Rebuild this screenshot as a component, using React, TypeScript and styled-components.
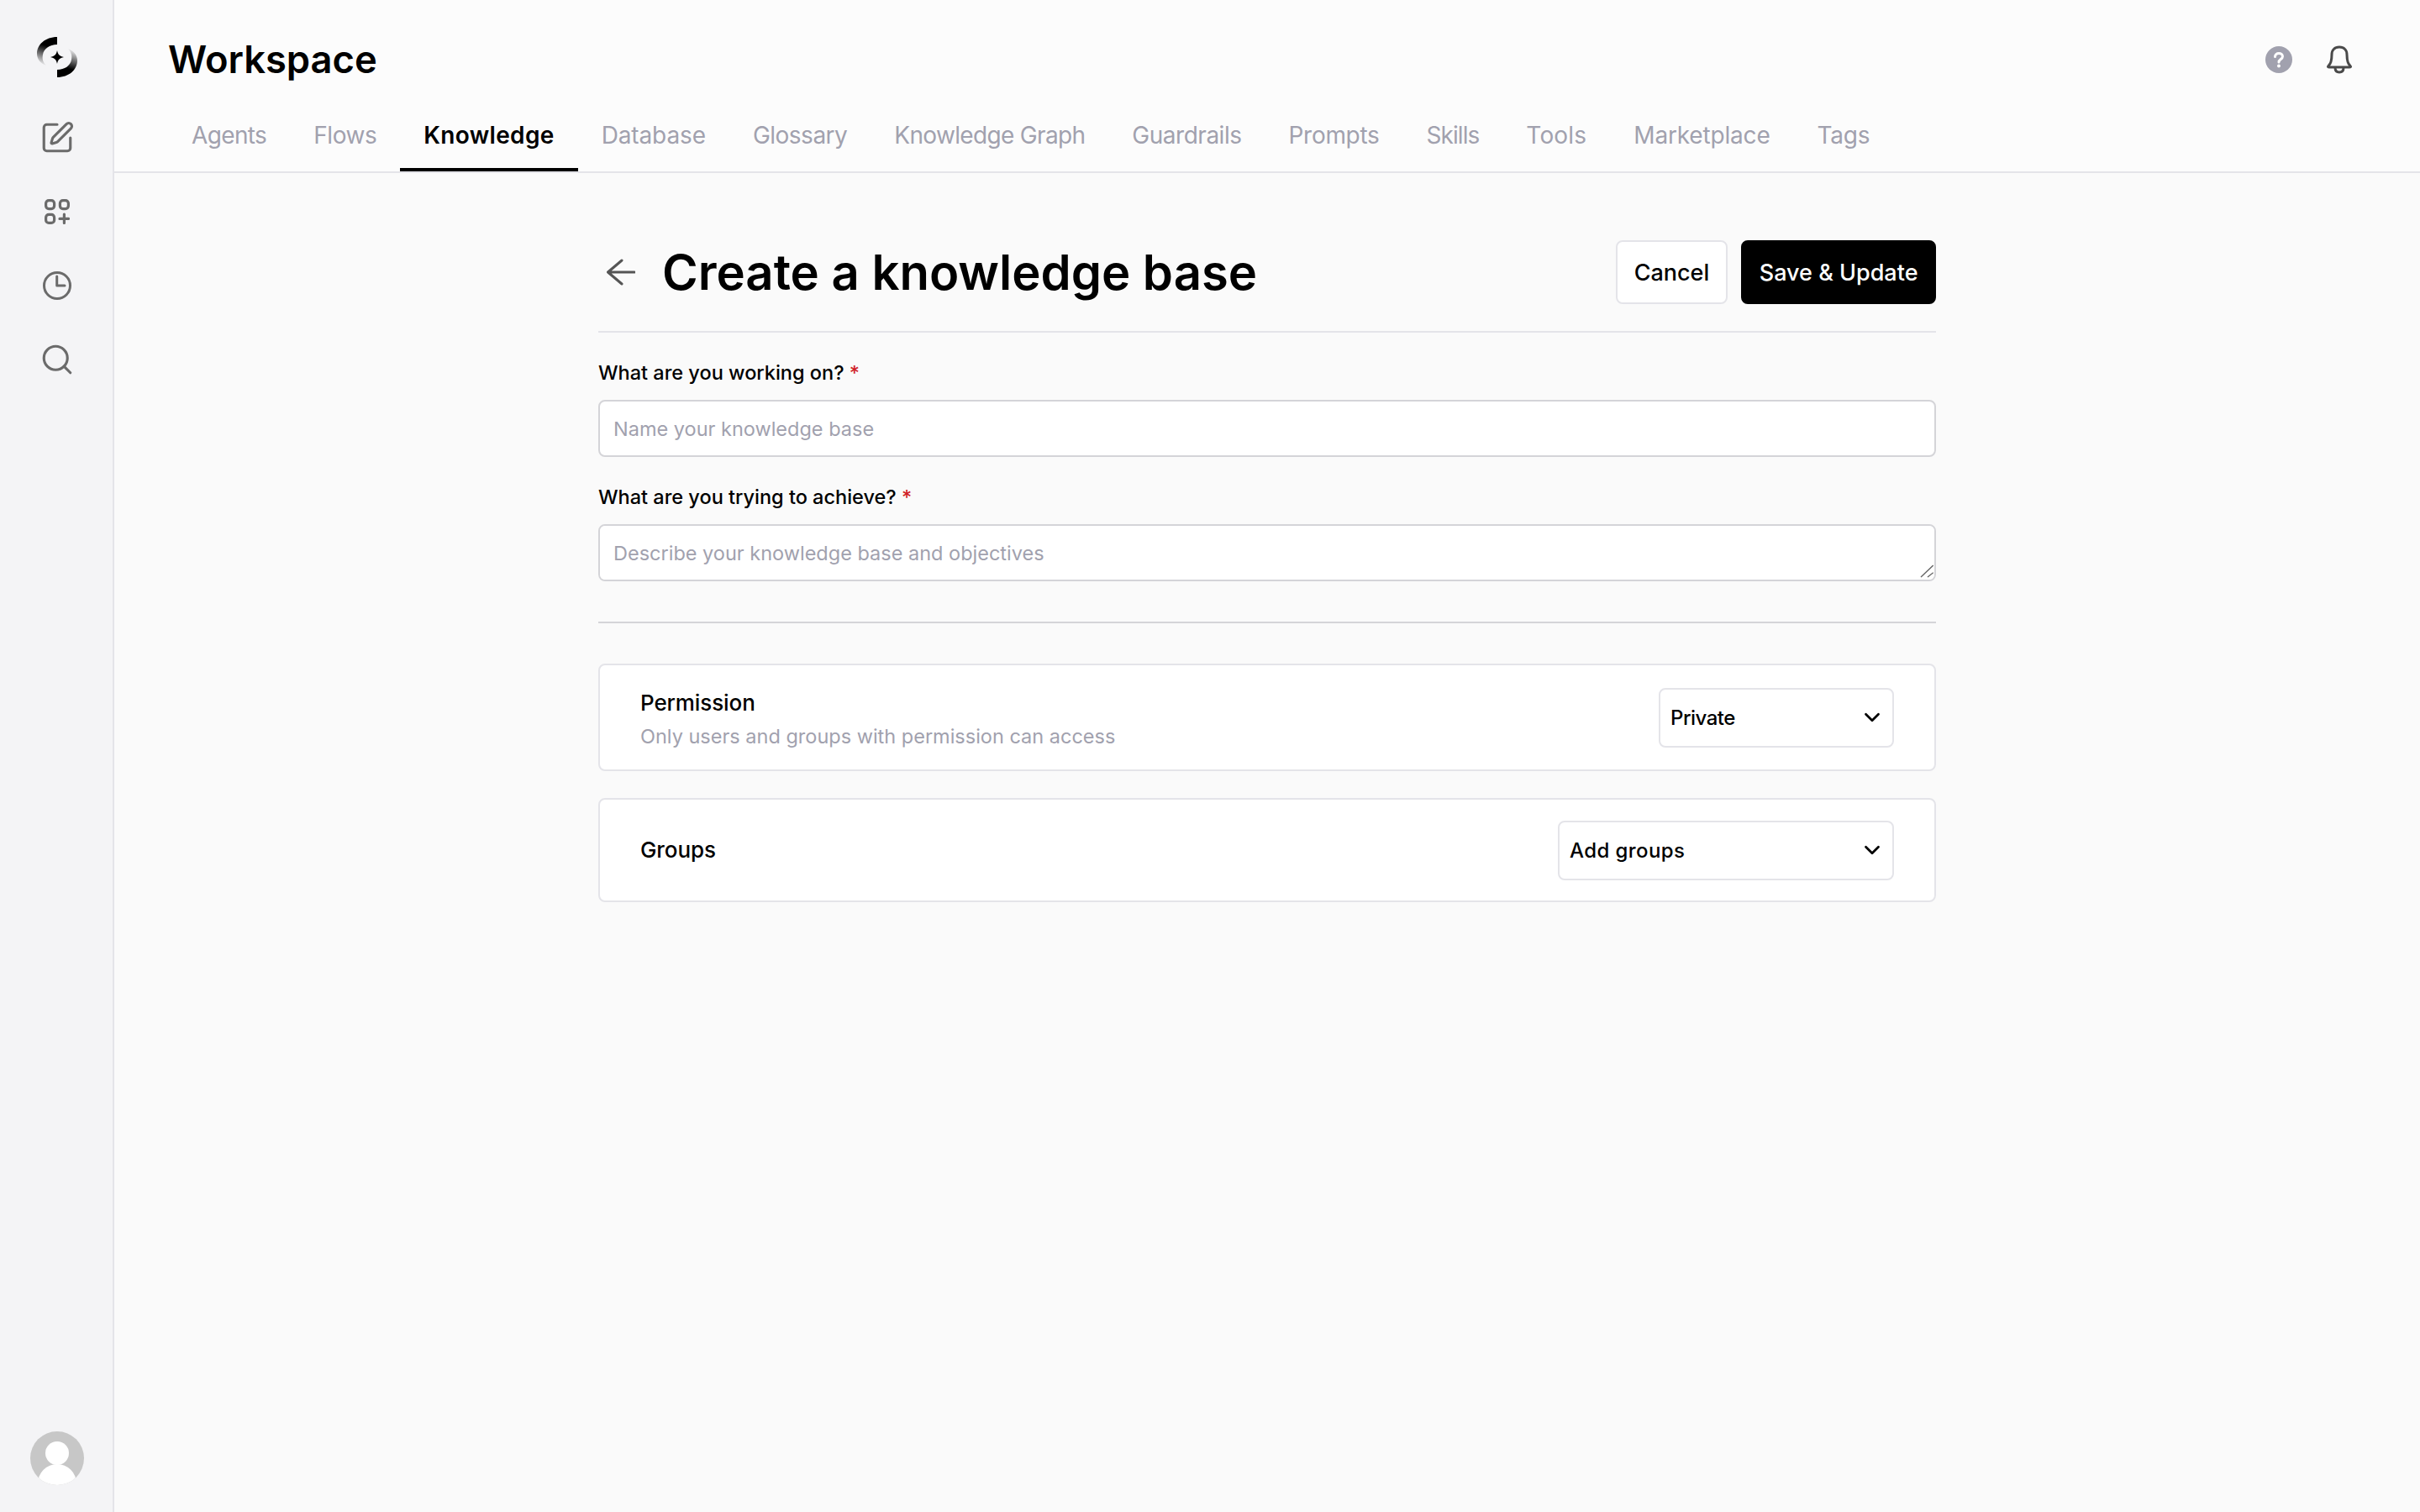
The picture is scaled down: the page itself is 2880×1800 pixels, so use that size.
import React from 'react';
import styled, {createGlobalStyle} from 'styled-components';
import {ChevronDown, Search, SquarePen} from 'lucide-react';

const GlobalStyle = createGlobalStyle`
  html, body {
    margin: 0;
    padding: 0;
    background: #fafafa;
  }
  * {
    box-sizing: border-box;
  }
  body {
    font-family: Inter, 'Liberation Sans', sans-serif;
    color: #000;
  }
`;

const TABS = [
  {label: 'Agents', spacing: -0.63},
  {label: 'Flows', spacing: -0.45},
  {label: 'Knowledge', spacing: 0.33},
  {label: 'Database', spacing: -0.12},
  {label: 'Glossary', spacing: -0.5},
  {label: 'Knowledge Graph', spacing: -0.67},
  {label: 'Guardrails', spacing: -0.48},
  {label: 'Prompts', spacing: -0.3},
  {label: 'Skills', spacing: -0.95},
  {label: 'Tools', spacing: 0.2},
  {label: 'Marketplace', spacing: -0.18},
  {label: 'Tags', spacing: -0.25},
];

const Page = styled.div`
  display: flex;
  width: 2880px;
  height: 1800px;
  overflow: hidden;
`;

const Sidebar = styled.aside`
  display: flex;
  flex-direction: column;
  align-items: center;
  flex: 0 0 136px;
  padding: 44px 0 32px 2px;
  background: #f4f4f6;
  border-right: 2px solid #e4e4e9;
`;

const SideNav = styled.nav`
  display: flex;
  flex-direction: column;
  align-items: center;
  gap: 52px;
  margin-top: 54px;
  color: #6b6b6b;
`;

const SideIcon = styled.div`
  display: flex;
  align-items: center;
  justify-content: center;
  width: 36px;
  height: 36px;
  svg {
    flex: none;
  }
`;

const Avatar = styled.svg`
  width: 64px;
  height: 64px;
  margin-top: auto;
`;

const Main = styled.main`
  display: flex;
  flex-direction: column;
  flex: 1;
`;

const Header = styled.header`
  display: flex;
  flex-direction: column;
  height: 206px;
  background: #fcfcfc;
  border-bottom: 2px solid #e4e4e9;
`;

const TopRow = styled.div`
  display: flex;
  align-items: center;
  justify-content: space-between;
  height: 142px;
  padding: 0 80px 0 64px;
`;

const PageTitle = styled.h1`
  margin: 0;
  font-size: 45.3px;
  line-height: 60px;
  font-weight: 600;
`;

const TopIcons = styled.div`
  display: flex;
  align-items: center;
  gap: 40px;
`;

const Tabs = styled.nav`
  display: flex;
  height: 62px;
  padding-left: 64px;
`;

const Tab = styled.a<{ $active?: boolean; $spacing: number }>`
  display: flex;
  align-items: center;
  height: 62px;
  padding: 0 28px 21px;
  font-size: 28px;
  letter-spacing: ${p => p.$spacing}px;
  font-weight: ${p => (p.$active ? 600 : 400)};
  color: ${p => (p.$active ? '#000' : '#a1a1ae')};
  border-bottom: 4px solid ${p => (p.$active ? '#000' : 'transparent')};
`;

const Content = styled.div`
  display: flex;
  flex-direction: column;
  width: 1592px;
  margin: 0 0 0 576px;
  padding-top: 80px;
`;

const TitleRow = styled.div`
  display: flex;
  align-items: center;
  justify-content: space-between;
  height: 110px;
  padding-bottom: 32px;
  border-bottom: 2px solid #e4e4e9;
`;

const TitleLeft = styled.div`
  display: flex;
  align-items: center;
  gap: 32px;
  padding-left: 8px;
`;

const FormTitle = styled.h2`
  margin: 0;
  font-size: 58px;
  line-height: 76px;
  font-weight: 600;
`;

const Actions = styled.div`
  display: flex;
  gap: 16px;
`;

const Button = styled.button<{ $primary?: boolean }>`
  height: 76px;
  padding: 0 ${p => (p.$primary ? 19.5 : 20)}px;
  font-family: inherit;
  font-size: 27px;
  font-weight: 500;
  border-radius: 8px;
  color: ${p => (p.$primary ? '#fff' : '#000')};
  background: ${p => (p.$primary ? '#000' : '#fff')};
  border: 2px solid ${p => (p.$primary ? '#000' : '#e4e4e9')};
`;

const Label = styled.label`
  display: block;
  margin: 33px 0 17px;
  font-size: 23.5px;
  line-height: 30px;
  font-weight: 500;
`;

const Required = styled.span`
  color: #d01f26;
`;

const fieldCss = `
  display: block;
  width: 100%;
  height: 68px;
  padding: 0 16px;
  font-family: inherit;
  font-size: 23.5px;
  background: #fff;
  border: 2px solid #d4d4d8;
  border-radius: 8px;
  outline: none;
  &::placeholder {
    color: #a1a1ae;
    opacity: 1;
  }
`;

const Input = styled.input`
  ${fieldCss}
`;

const TextAreaWrap = styled.div`
  position: relative;
`;

const TextArea = styled.textarea`
  ${fieldCss}
  padding: 18px 16px;
  line-height: 30px;
  resize: none;
`;

const ResizeGrip = styled.svg`
  position: absolute;
  right: 3px;
  bottom: 4px;
  width: 16px;
  height: 16px;
  pointer-events: none;
`;

const Divider = styled.hr`
  width: 100%;
  height: 2px;
  margin: 48px 0;
  background: #d4d4d8;
  border: 0;
`;

const Card = styled.section<{ $height: number }>`
  display: flex;
  align-items: center;
  justify-content: space-between;
  height: ${p => p.$height}px;
  padding: 0 48px;
  margin-bottom: 32px;
  background: #fff;
  border: 2px solid #e4e4e9;
  border-radius: 8px;
`;

const CardTitle = styled.div`
  font-size: 26px;
  line-height: 42px;
  letter-spacing: -0.1px;
  font-weight: 500;
`;

const CardHint = styled.div`
  margin-top: 3px;
  font-size: 23.5px;
  line-height: 32px;
  color: #a1a1ae;
`;

const Select = styled.div<{ $width: number; $spacing: number }>`
  display: flex;
  align-items: center;
  justify-content: space-between;
  width: ${p => p.$width}px;
  height: 71px;
  padding: 0 9px 0 12px;
  font-size: 24px;
  letter-spacing: ${p => p.$spacing}px;
  font-weight: 500;
  background: #fff;
  border: 2px solid #e4e4e9;
  border-radius: 8px;
`;

const Logo = () => (
  <svg width="48" height="48" viewBox="0 0 48 48">
    <defs>
      <linearGradient id="logoTop" x1="0.5" y1="0" x2="0.3" y2="1">
        <stop offset="0.3" stopColor="#000" />
        <stop offset="1" stopColor="#000" stopOpacity="0" />
      </linearGradient>
      <linearGradient id="logoBottom" x1="0.5" y1="1" x2="0.7" y2="0">
        <stop offset="0.3" stopColor="#000" />
        <stop offset="1" stopColor="#000" stopOpacity="0" />
      </linearGradient>
    </defs>
    <path fill="url(#logoTop)" d="M24 0C10 0 0 9 0 20C0 27 5 32 11 34C7 30 6 26 7 21C8 14 15 9 24 9Z" />
    <path fill="url(#logoBottom)" d="M24 48C38 48 48 39 48 28C48 21 43 16 37 14C41 18 42 22 41 27C40 34 33 39 24 39Z" />
    <path fill="#000" d="M24 16C25 21 27 23 32 24C27 25 25 27 24 32C23 27 21 25 16 24C21 23 23 21 24 16Z" />
  </svg>
);

const WidgetPlus = () => (
  <svg width="30" height="30" viewBox="0 0 30 30" fill="none" stroke="currentColor" strokeWidth="3.2" strokeLinecap="round">
    <rect x="1.6" y="1.6" width="10" height="10" rx="3.5" />
    <rect x="18.4" y="1.6" width="10" height="10" rx="3.5" />
    <rect x="1.6" y="18.4" width="10" height="10" rx="3.5" />
    <path d="M23.4 18V28.6M18 23.4H28.6" />
  </svg>
);

const ClockIcon = () => (
  <svg width="36" height="36" viewBox="0 0 36 36" fill="none" stroke="currentColor" strokeWidth="3" strokeLinecap="round" strokeLinejoin="round">
    <circle cx="18" cy="18" r="15.5" />
    <path d="M17.7 7V18H27" />
  </svg>
);

const HelpIcon = () => (
  <svg width="32" height="32" viewBox="0 0 32 32">
    <circle cx="16" cy="16" r="16" fill="#a1a1ae" />
    <path d="M11.5 12.5C11.5 10 13.5 8.5 16 8.5C18.5 8.5 20.5 10 20.5 12.3C20.5 15.5 16 15.5 16 19" fill="none" stroke="#fff" strokeWidth="3" strokeLinecap="round" />
    <circle cx="16" cy="23.5" r="2" fill="#fff" />
  </svg>
);

const BellIcon = () => (
  <svg width="32" height="34" viewBox="0 0 32 34" fill="none" stroke="#4a4a4a" strokeWidth="3" strokeLinecap="round" strokeLinejoin="round">
    <path d="M3 24.5C6 22 7 18 7 11C7 5.5 10.5 2 16 2C21.5 2 25 5.5 25 11C25 18 26 22 29 24.5C30 25.5 29.5 26 28 26H4C2.5 26 2 25.5 3 24.5Z" />
    <path d="M11 26.5C11 30 13 32 16 32C19 32 21 30 21 26.5" />
  </svg>
);

const BackArrow = () => (
  <svg width="36" height="36" viewBox="0 0 36 36" fill="none" stroke="#555" strokeWidth="3" strokeLinecap="round" strokeLinejoin="round">
    <path d="M35 18H4M20 4L3.5 18L20 32" />
  </svg>
);

export default function App() {
  return (
    <Page>
      <GlobalStyle />
      <Sidebar>
        <Logo />
        <SideNav>
          <SideIcon><SquarePen size={42} strokeWidth={1.8} /></SideIcon>
          <SideIcon><WidgetPlus /></SideIcon>
          <SideIcon><ClockIcon /></SideIcon>
          <SideIcon><Search size={42} strokeWidth={1.8} /></SideIcon>
        </SideNav>
        <Avatar viewBox="0 0 64 64">
          <defs>
            <clipPath id="avatarClip"><circle cx="32" cy="32" r="32" /></clipPath>
          </defs>
          <g clipPath="url(#avatarClip)">
            <rect width="64" height="64" fill="#c7c7c7" />
            <circle cx="32" cy="26" r="14" fill="#fff" />
            <ellipse cx="32" cy="62" rx="23" ry="23" fill="#fff" />
          </g>
        </Avatar>
      </Sidebar>
      <Main>
        <Header>
          <TopRow>
            <PageTitle>Workspace</PageTitle>
            <TopIcons>
              <HelpIcon />
              <BellIcon />
            </TopIcons>
          </TopRow>
          <Tabs>
            {TABS.map(tab => (
              <Tab key={tab.label} $active={tab.label === 'Knowledge'} $spacing={tab.spacing}>{tab.label}</Tab>
            ))}
          </Tabs>
        </Header>
        <Content>
          <TitleRow>
            <TitleLeft>
              <BackArrow />
              <FormTitle>Create a knowledge base</FormTitle>
            </TitleLeft>
            <Actions>
              <Button>Cancel</Button>
              <Button $primary>Save &amp; Update</Button>
            </Actions>
          </TitleRow>
          <Label>What are you working on? <Required>*</Required></Label>
          <Input placeholder="Name your knowledge base" />
          <Label>What are you trying to achieve? <Required>*</Required></Label>
          <TextAreaWrap>
            <TextArea rows={1} placeholder="Describe your knowledge base and objectives" />
            <ResizeGrip viewBox="0 0 16 16" fill="none" stroke="#666" strokeWidth="1.4">
              <path d="M1 15L15.7 1M9 15L15.7 9.7" />
            </ResizeGrip>
          </TextAreaWrap>
          <Divider />
          <Card $height={128}>
            <div>
              <CardTitle>Permission</CardTitle>
              <CardHint>Only users and groups with permission can access</CardHint>
            </div>
            <Select $width={280} $spacing={-0.5}>Private<ChevronDown size={30} color="#000" strokeWidth={2.2} /></Select>
          </Card>
          <Card $height={124}>
            <CardTitle>Groups</CardTitle>
            <Select $width={400} $spacing={0.4}>Add groups<ChevronDown size={30} color="#000" strokeWidth={2.2} /></Select>
          </Card>
        </Content>
      </Main>
    </Page>
  );
}
